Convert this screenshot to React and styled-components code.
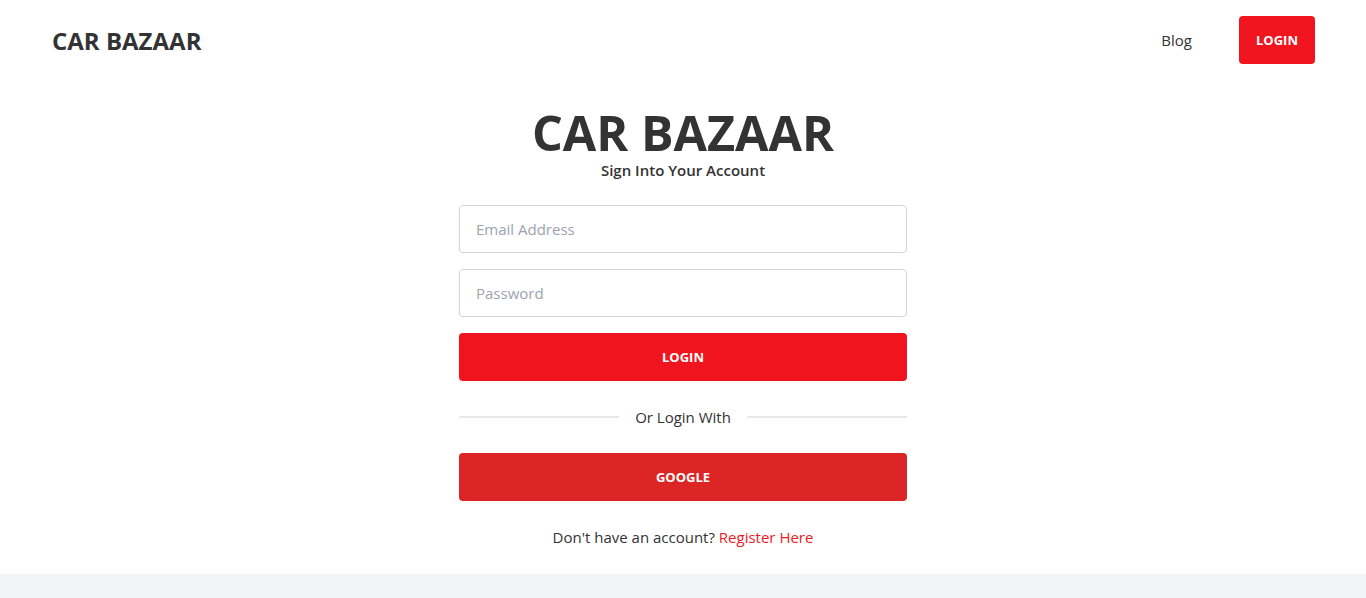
import React from "react";
import styled, { createGlobalStyle } from "styled-components";

const Global = createGlobalStyle`
  * { box-sizing: border-box; }
  html, body { margin: 0; padding: 0; background: #fff; }
  body { font-family: "Open Sans", "Noto Sans", Arial, sans-serif; color: #333; }
`;

const Page = styled.div`
  min-height: 598px;
  display: flex;
  flex-direction: column;
`;

const Header = styled.header`
  height: 80px;
  display: flex;
  align-items: center;
  justify-content: space-between;
  padding: 0 51px 0 52px;
`;

const Logo = styled.div`
  font-size: 24px;
  font-weight: 700;
  color: #333;
`;

const Nav = styled.nav`
  display: flex;
  align-items: center;
  gap: 47px;
`;

const NavLink = styled.a`
  font-size: 15px;
  color: #333;
  font-weight: 500;
  text-decoration: none;
`;

const RedButton = styled.button`
  border: none;
  border-radius: 4px;
  background: ${(p) => p.$bg || "#f0141f"};
  color: #fff;
  font-family: inherit;
  font-weight: 700;
  font-size: 13px;
  height: 48px;
  width: ${(p) => p.$width || "100%"};
  cursor: pointer;
`;

const Main = styled.main`
  flex: 1;
  display: flex;
  flex-direction: column;
  align-items: center;
  padding-top: 24px;
`;

const Title = styled.h1`
  margin: 0;
  font-size: 48.5px;
  line-height: 56px;
  font-weight: 700;
  color: #333;
`;

const Subtitle = styled.p`
  margin: 0;
  font-size: 15px;
  font-weight: 600;
  line-height: 20px;
  color: #333;
`;

const Form = styled.form`
  width: 448px;
  margin-top: 25px;
  display: flex;
  flex-direction: column;
  gap: 16px;
`;

const Input = styled.input`
  height: 48px;
  width: 100%;
  border: 1px solid #d4d4d4;
  border-radius: 4px;
  padding: 0 16px;
  font-family: inherit;
  font-size: 15px;
  color: #333;
  outline: none;
  &::placeholder { color: #9ca3af; }
`;

const Divider = styled.div`
  display: flex;
  align-items: center;
  gap: 16px;
  height: 40px;
  font-size: 15px;
  color: #333;
  &::before, &::after {
    content: "";
    flex: 1;
    height: 2px;
    background: #e8e8e8;
  }
`;

const Footnote = styled.p`
  margin: 4px 0 0;
  text-align: center;
  font-size: 15px;
  color: #333;
  line-height: 32px;
`;

const Link = styled.a`
  color: #ef1a26;
  text-decoration: none;
`;

const Footer = styled.footer`
  height: 24px;
  background: #f2f3f5;
`;

export default function App() {
  return (
    <Page>
      <Global />
      <Header>
        <Logo>CAR BAZAAR</Logo>
        <Nav>
          <NavLink href="#">Blog</NavLink>
          <RedButton $width="76px">LOGIN</RedButton>
        </Nav>
      </Header>
      <Main>
        <Title>CAR BAZAAR</Title>
        <Subtitle>Sign Into Your Account</Subtitle>
        <Form onSubmit={(e) => e.preventDefault()}>
          <Input type="email" placeholder="Email Address" />
          <Input type="password" placeholder="Password" />
          <RedButton type="submit">LOGIN</RedButton>
          <Divider>Or Login With</Divider>
          <RedButton type="button" $bg="#dc2626">GOOGLE</RedButton>
          <Footnote>
            Don't have an account? <Link href="#">Register Here</Link>
          </Footnote>
        </Form>
      </Main>
      <Footer />
    </Page>
  );
}
